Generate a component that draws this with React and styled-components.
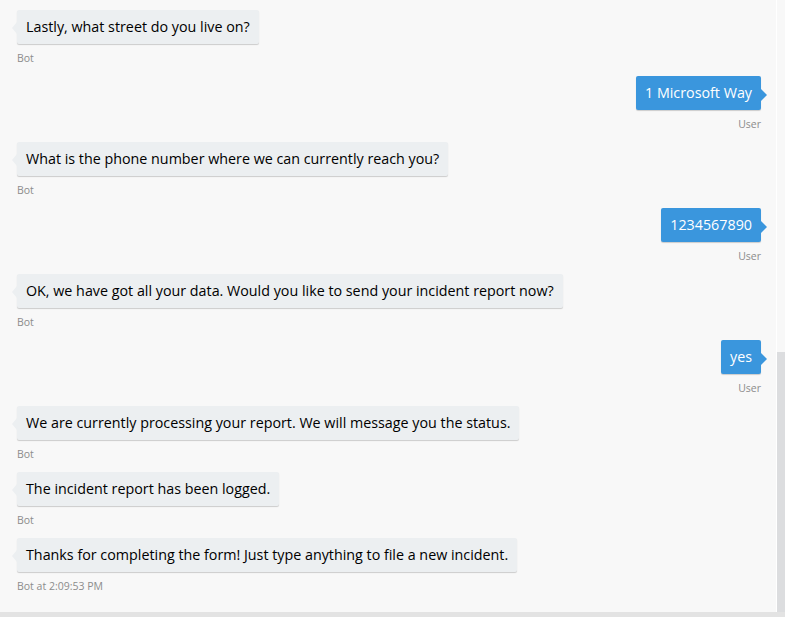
import React from "react"
import styled, { createGlobalStyle } from "styled-components"

const GlobalStyle = createGlobalStyle`
  html, body {
    margin: 0;
    padding: 0;
    background: #f8f8f8;
  }
  body {
    font-family: "Open Sans", "Noto Sans", sans-serif;
  }
`

const Chat = styled.div`
  width: 785px;
  height: 617px;
  display: flex;
  flex-direction: column;
  overflow: hidden;
  background: #f8f8f8;
`

const Body = styled.div`
  flex: 1;
  display: flex;
  min-height: 0;
`

const History = styled.div`
  flex: 1;
  display: flex;
  flex-direction: column;
  padding: 10px 15px 0 17px;
  border-right: 1px solid #ffffff;
`

const Track = styled.div`
  width: 8px;
  display: flex;
  flex-direction: column;
`

const Thumb = styled.div`
  margin-top: 352px;
  flex: 1;
  background: #dcdddf;
`

const Footer = styled.div`
  height: 5px;
  background: #e3e3e3;
`

const Group = styled.div`
  display: flex;
  flex-direction: column;
  align-items: ${p => (p.$user ? "flex-end" : "flex-start")};
  margin-bottom: 11px;
`

const Bubble = styled.div`
  position: relative;
  padding: 8px 9px;
  border-radius: 2px;
  font-size: 14.3px;
  line-height: 18px;
  background: ${p => (p.$user ? "#3a96dd" : "#eceff1")};
  color: ${p => (p.$user ? "#ffffff" : "#000000")};
  box-shadow: 0 1px 1px rgba(0, 0, 0, 0.18);

  &::before {
    content: "";
    position: absolute;
    top: ${p => (p.$user ? "13px" : "12px")};
    ${p => (p.$user ? "right: -6px;" : "left: -5px;")}
    border-top: 6px solid transparent;
    border-bottom: 6px solid transparent;
    ${p =>
      p.$user
        ? "border-left: 6px solid #3a96dd;"
        : "border-right: 5px solid #eceff1;"}
  }
`

const From = styled.div`
  margin-top: 7px;
  font-size: 10.5px;
  line-height: 14px;
  color: #8c8c8c;
`

const messages = [
  { from: "bot", text: "Lastly, what street do you live on?" },
  { from: "user", text: "1 Microsoft Way" },
  { from: "bot", text: "What is the phone number where we can currently reach you?" },
  { from: "user", text: "1234567890" },
  { from: "bot", text: "OK, we have got all your data. Would you like to send your incident report now?" },
  { from: "user", text: "yes" },
  { from: "bot", text: "We are currently processing your report. We will message you the status." },
  { from: "bot", text: "The incident report has been logged." },
  {
    from: "bot",
    text: "Thanks for completing the form! Just type anything to file a new incident.",
    time: "2:09:53 PM",
  },
]

export default function App() {
  return (
    <>
      <GlobalStyle />
      <Chat>
        <Body>
          <History>
            {messages.map((m, i) => {
              const user = m.from === "user"
              return (
                <Group key={i} $user={user}>
                  <Bubble $user={user}>{m.text}</Bubble>
                  <From>
                    {user ? "User" : "Bot"}
                    {m.time ? ` at ${m.time}` : ""}
                  </From>
                </Group>
              )
            })}
          </History>
          <Track>
            <Thumb />
          </Track>
        </Body>
        <Footer />
      </Chat>
    </>
  )
}
